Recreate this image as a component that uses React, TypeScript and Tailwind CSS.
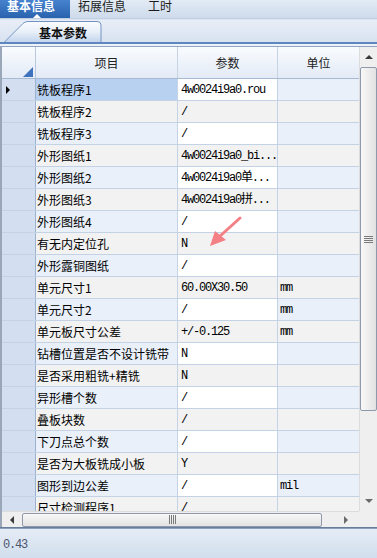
import React from "react";

type Row = { item: string; param: string; unit: string };

const rows: Row[] = [
  { item: "铣板程序1", param: "4w0024i9a0.rou", unit: "" },
  { item: "铣板程序2", param: "/", unit: "" },
  { item: "铣板程序3", param: "/", unit: "" },
  { item: "外形图纸1", param: "4w0024i9a0_bi...", unit: "" },
  { item: "外形图纸2", param: "4w0024i9a0单...", unit: "" },
  { item: "外形图纸3", param: "4w0024i9a0拼...", unit: "" },
  { item: "外形图纸4", param: "/", unit: "" },
  { item: "有无内定位孔", param: "N", unit: "" },
  { item: "外形露铜图纸", param: "/", unit: "" },
  { item: "单元尺寸1", param: "60.00X30.50", unit: "mm" },
  { item: "单元尺寸2", param: "/", unit: "mm" },
  { item: "单元板尺寸公差", param: "+/-0.125", unit: "mm" },
  { item: "钻槽位置是否不设计铣带", param: "N", unit: "" },
  { item: "是否采用粗铣+精铣", param: "N", unit: "" },
  { item: "异形槽个数", param: "/", unit: "" },
  { item: "叠板块数", param: "/", unit: "" },
  { item: "下刀点总个数", param: "/", unit: "" },
  { item: "是否为大板铣成小板", param: "Y", unit: "" },
  { item: "图形到边公差", param: "/", unit: "mil" },
  { item: "尺寸检测程序1", param: "/", unit: "" },
];

const mono = "font-['Liberation_Mono','Noto_Sans_CJK_SC',monospace] text-[12px] tracking-[-1.2px]";

export default function App() {
  return (
    <div className="relative w-[377px] h-[558px] overflow-hidden flex flex-col bg-[#e6edf6] font-['Noto_Sans_CJK_SC',sans-serif] text-[12px] text-black">
      {/* top tabs */}
      <div className="h-[18px] shrink-0 flex bg-gradient-to-b from-[#e3ebf5] to-[#cedbeb]">
        <div className="relative w-[70px] h-full pl-[7px] leading-[12px] font-bold text-white bg-gradient-to-b from-[#4683cf] to-[#2a62ad]">
          基本信息
          <div className="absolute left-[33px] bottom-0 w-0 h-0 border-l-[4px] border-r-[4px] border-b-[4px] border-l-transparent border-r-transparent border-b-white" />
        </div>
        <div className="ml-[8px] leading-[12px] text-[#1c1c1c]">拓展信息</div>
        <div className="ml-[22px] leading-[12px] text-[#1c1c1c]">工时</div>
      </div>
      <div className="h-[2px] shrink-0 bg-gradient-to-b from-[#b3c5dc] to-[#e9eff7]" />

      {/* sub tabs */}
      <div className="h-[22px] shrink-0 flex items-end bg-gradient-to-b from-[#e8eef7] to-[#d8e3f0]">
        <div className="relative ml-[4px] w-[98px] h-[21px] flex items-center">
          <svg className="absolute inset-0" width="98" height="21" viewBox="0 0 98 21">
            <defs>
              <linearGradient id="tabg" x1="0" y1="0" x2="0" y2="1">
                <stop offset="0" stopColor="#fbfcfe" />
                <stop offset="0.5" stopColor="#e9f0f9" />
                <stop offset="1" stopColor="#c3d5ed" />
              </linearGradient>
            </defs>
            <path d="M0.5 21 L19 2.5 Q21 0.5 24 0.5 L93 0.5 Q97 0.5 97 4 L97 21" fill="url(#tabg)" stroke="#7394c2" strokeWidth="1" />
          </svg>
          <span className="relative ml-[35px] mt-[2px] font-bold leading-[14px] text-[#111]">基本参数</span>
        </div>
      </div>
      <div className="h-[2px] shrink-0 bg-[#5f87bf]" />
      <div className="h-[2px] shrink-0 bg-[#edf2f9]" />

      {/* grid */}
      <div className="h-[481px] shrink-0 flex flex-col border-t border-[#8fa4c0] border-l-2 border-l-[#9aa7b9] bg-white">
        <div className="h-[464px] flex">
          <div className="w-[357px] flex flex-col">
            {/* header */}
            <div className="h-[32px] shrink-0 flex border-b border-[#a7bad3] bg-gradient-to-b from-[#f9fbfe] to-[#e3ebf6] text-[#222]">
              <div className="relative w-[34px] h-full border-r border-[#b9c9dd]">
                <div
                  className="absolute right-[2px] bottom-[1px]"
                  style={{ borderBottom: "10px solid #3f72bd", borderLeft: "10px solid transparent", width: 0, height: 0 }}
                />
              </div>
              <div className="w-[142px] h-full flex items-center justify-center border-r border-[#c6d3e3]">项目</div>
              <div className="w-[100px] h-full flex items-center justify-center border-r border-[#c6d3e3]">参数</div>
              <div className="flex-1 h-full flex items-center justify-center">单位</div>
            </div>
            {/* rows */}
            <div className="h-[432px] overflow-hidden flex flex-col">
              {rows.map((r, i) => {
                const odd = i % 2 === 1;
                const tint = odd ? "bg-[#f2f2f2]" : "bg-[#e9f0fa]";
                const itemBg = i === 0 ? "bg-[#b9d1f1]" : tint;
                const paramBg = odd ? "bg-[#f2f2f2]" : "bg-white";
                return (
                  <div key={i} className="h-[22px] shrink-0 flex border-b border-[#c4d2e6]">
                    <div className="w-[34px] h-full flex items-center pl-[4px] bg-[#d3dff0] border-r border-[#9db2cf]">
                      {i === 0 && (
                        <div className="w-0 h-0 border-t-[4px] border-b-[4px] border-l-[4px] border-t-transparent border-b-transparent border-l-black" />
                      )}
                    </div>
                    <div className={`w-[142px] h-full flex items-center pl-[1px] whitespace-nowrap overflow-hidden border-r border-[#c4d2e6] ${itemBg}`}>
                      {r.item}
                    </div>
                    <div className={`w-[100px] h-full flex items-center pl-[3px] whitespace-nowrap overflow-hidden border-r border-[#c4d2e6] ${paramBg} ${mono}`}>
                      {r.param}
                    </div>
                    <div className={`flex-1 h-full flex items-center pl-[2px] whitespace-nowrap overflow-hidden ${tint} ${mono}`}>
                      {r.unit}
                    </div>
                  </div>
                );
              })}
            </div>
          </div>
          {/* vertical scrollbar */}
          <div className="w-[18px] h-full flex flex-col bg-[#efefef] border-l border-[#dcdcdc]">
            <div className="h-[20px] shrink-0 flex items-center justify-center">
              <div className="w-0 h-0 border-l-[4px] border-r-[4px] border-b-[4px] border-l-transparent border-r-transparent border-b-[#3a3a3a]" />
            </div>
            <div className="h-[344px] shrink-0 rounded-[2px] border border-[#8e9aab] bg-gradient-to-r from-[#f8f8f8] to-[#e2e2e2] flex items-center justify-center">
              <div className="flex flex-col gap-[1px]">
                <div className="w-[9px] h-[1px] bg-[#7a7a7a]" />
                <div className="w-[9px] h-[1px] bg-[#7a7a7a]" />
                <div className="w-[9px] h-[1px] bg-[#7a7a7a]" />
                <div className="w-[9px] h-[1px] bg-[#7a7a7a]" />
              </div>
            </div>
            <div className="flex-1" />
            <div className="h-[20px] shrink-0 flex items-center justify-center">
              <div className="w-0 h-0 border-l-[4px] border-r-[4px] border-t-[4px] border-l-transparent border-r-transparent border-t-[#6a6a6a]" />
            </div>
          </div>
        </div>
        {/* horizontal scrollbar */}
        <div className="h-[16px] flex">
          <div className="w-[357px] h-full flex items-center bg-[#efefef] border-t border-[#dcdcdc]">
            <div className="w-[20px] h-full flex items-center justify-center">
              <div className="w-0 h-0 border-t-[4px] border-b-[4px] border-r-[4px] border-t-transparent border-b-transparent border-r-[#3a3a3a]" />
            </div>
            <div className="w-[300px] h-[14px] rounded-[2px] border border-[#8e9aab] bg-gradient-to-b from-[#f8f8f8] to-[#e2e2e2] flex items-center justify-center">
              <div className="flex gap-[1px]">
                <div className="w-[1px] h-[9px] bg-[#7a7a7a]" />
                <div className="w-[1px] h-[9px] bg-[#7a7a7a]" />
                <div className="w-[1px] h-[9px] bg-[#7a7a7a]" />
                <div className="w-[1px] h-[9px] bg-[#7a7a7a]" />
              </div>
            </div>
            <div className="flex-1" />
            <div className="w-[20px] h-full flex items-center justify-center mr-[3px]">
              <div className="w-0 h-0 border-t-[4px] border-b-[4px] border-l-[4px] border-t-transparent border-b-transparent border-l-[#6a6a6a]" />
            </div>
          </div>
          <div className="flex-1 h-full bg-[#efefef]" />
        </div>
      </div>

      {/* status bar */}
      <div className="h-[2px] shrink-0 bg-gradient-to-b from-[#566c8c] to-[#9fb1c8]" />
      <div className="flex-1 flex items-center pl-[3px] pt-[3px] bg-gradient-to-b from-[#e4ecf6] to-[#d2deed] text-[#4a5570] font-['Liberation_Mono',monospace] text-[12px] tracking-[-1.2px]">
        0.43
      </div>

      {/* pink annotation arrow */}
      <svg className="absolute left-0 top-0 pointer-events-none" width="377" height="558" viewBox="0 0 377 558">
        <line x1="240" y1="218" x2="219" y2="237" stroke="#f47f84" strokeWidth="3" strokeLinecap="round" />
        <polygon points="210,246 215,231 226,240" fill="#f47f84" />
      </svg>
    </div>
  );
}
